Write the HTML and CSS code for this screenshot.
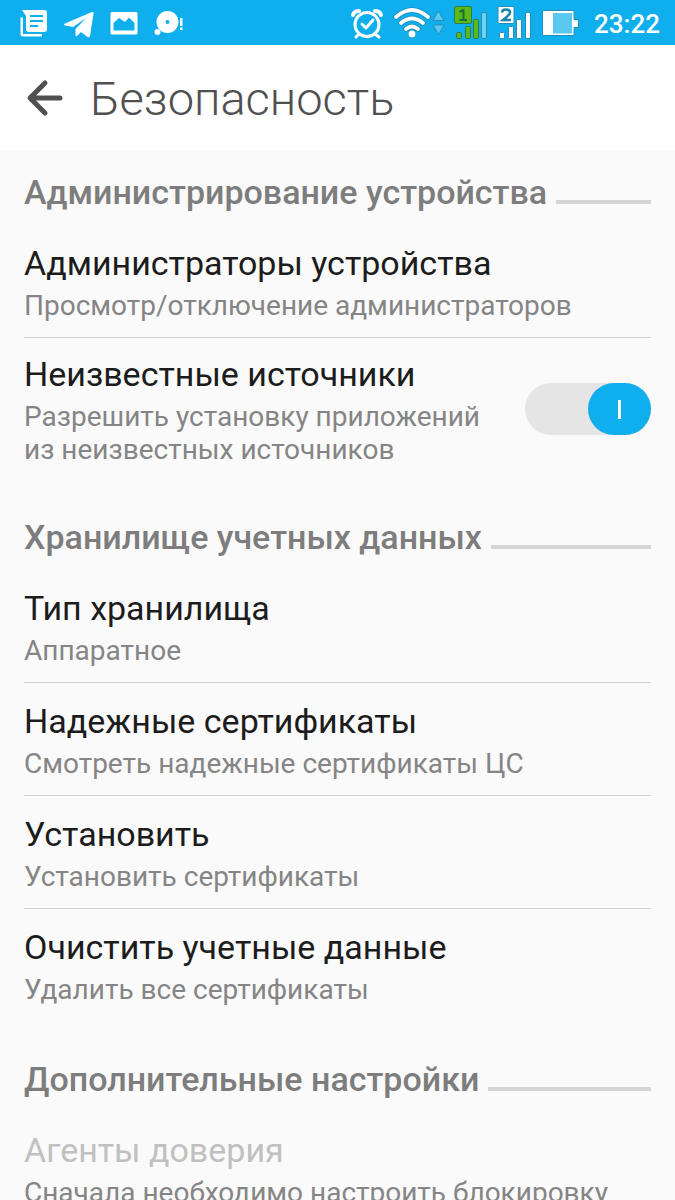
FILE: index.html
```html
<!DOCTYPE html>
<html lang="ru">
<head>
<meta charset="utf-8">
<meta name="viewport" content="width=device-width, initial-scale=1">
<title>Безопасность</title>
<link rel="stylesheet" href="styles.css">
</head>
<body>
<div class="screen">
  <div class="status-bar">
    <svg class="status-icons" width="190" height="45" viewBox="0 0 190 45" fill="#fff" aria-hidden="true">
      <path fill-rule="evenodd" d="M22 10H44Q47 10 47 13V29Q47 32 44 32H29Q26 32 26 29V16ZM30 15V17H43V15ZM30 20V22H43V20ZM30 25V27H38V25Z"/>
      <path d="M20.500 17.500H23V34H42V36.500H23Q20.500 36.500 20.500 34Z"/>
      <path d="M65 23.500L92 12Q94 11.500 93.500 14L90 36Q89.500 38 87.500 37L81 32L77 36Q75.500 37 75.500 35V29L86 18L73 27L65 25.500Q63 24.500 65 23.500Z"/>
      <path fill-rule="evenodd" d="M112 12H136Q137.500 12 137.500 13.500V33Q137.500 34.500 136 34.500H112Q110.500 34.500 110.500 33V13.500Q110.500 12 112 12ZM113.500 30.500H134.500V23L129 17.500L125 22L119 18L113.500 23Z"/>
      <circle cx="167.500" cy="22" r="11"/>
      <circle cx="167.500" cy="22" r="2" fill="#0fafed"/>
      <circle cx="157.500" cy="32" r="3"/>
      <path d="M180 18H182.500V26H180ZM180 27.500H182.500V30H180Z"/>
    </svg>
    <svg class="status-icons status-right" width="229" height="45" viewBox="350 0 229 45" aria-hidden="true">
      <g fill="none" stroke="#fff" stroke-width="3" stroke-linecap="round" stroke-linejoin="round">
        <circle cx="367" cy="24.500" r="12"/><path d="M362 24L366 28L373 20"/><path d="M359 34L356 37M375 34L379 37"/>
        <path stroke-width="4" d="M353 15Q354 11 359 11M375 11Q380 11 381 15"/>
      </g>
      <g fill="none" stroke="#168bb9" stroke-width="5.500" stroke-linecap="round">
        <path d="M396 17Q412 3 428 17M401 23Q412 14 423 23M406 29Q412 24 418 29"/><circle cx="412" cy="34" r="1.500"/>
      </g>
      <g fill="none" stroke="#fff" stroke-width="3.800" stroke-linecap="round">
        <path d="M396 17Q412 3 428 17M401 23Q412 14 423 23M406 29Q412 24 418 29"/>
      </g>
      <circle cx="412" cy="34" r="3.500" fill="#fff"/>
      <path fill="#5bc8f0" stroke="#248eb8" d="M438.500 11L444 20.500H433ZM433 25H444L438.500 34.500Z"/>
      <g fill="#5bb815" stroke="#2b7b50">
        <rect x="454.500" y="6.500" width="17" height="17" rx="1.500"/><rect x="456.500" y="32.500" width="5" height="6" rx="1"/><rect x="465.500" y="26.500" width="5" height="12" rx="1"/><rect x="473.500" y="19.500" width="5" height="19" rx="1"/>
        <rect x="481.500" y="12.500" width="5" height="26" rx="1.500" fill="#70d1f5" stroke="#2489b3"/>
      </g>
      <path fill="none" stroke="#1b6c37" stroke-width="2" d="M459.500 12L463.500 10V20M459.500 20H467"/>
      <g fill="#fff" stroke="#248eb8">
        <rect x="498" y="6.500" width="16" height="17" rx="1"/><rect x="499.500" y="32.500" width="5" height="6" rx="1"/><rect x="508.500" y="26.500" width="5" height="12" rx="1"/><rect x="516.500" y="19.500" width="5" height="19" rx="1"/><rect x="525.500" y="12.500" width="5" height="26" rx="1.500"/>
      </g>
      <path fill="none" stroke="#1684ad" stroke-width="2.500" d="M502 12.500Q502 9.500 506 9.500Q510 9.500 510 12.500Q510 14.500 503 20H511"/>
      <path fill="#fff" stroke="#248eb8" d="M542.500 10.500H574V19.500H578.500V27.500H574V35.500H542.500Z"/>
      <rect x="553" y="13" width="19" height="20.500" fill="#5bc8f0"/>
    </svg>
    <time class="clock">23:22</time>
  </div>
  <header class="app-bar">
    <button class="back" type="button" aria-label="Назад">
      <svg width="40" height="38" viewBox="0 0 40 38" fill="none" stroke="#505050" stroke-width="5" stroke-linecap="round" stroke-linejoin="round"><path d="M21 4L6 19L21 34M7 19H36"/></svg>
    </button>
    <h1 class="title">Безопасность</h1>
  </header>
  <main class="settings">
    <section class="group">
      <h2 class="group-title">Администрирование устройства</h2>
      <ul class="list">
        <li class="item"><h3 class="name">Администраторы устройства</h3><p class="note">Просмотр/отключение администраторов</p></li>
        <li class="item item-switch">
          <label class="item-text" for="unknown"><span class="name">Неизвестные источники</span><span class="note">Разрешить установку приложений из неизвестных источников</span></label>
          <input class="switch" id="unknown" type="checkbox" role="switch" checked>
        </li>
      </ul>
    </section>
    <section class="group">
      <h2 class="group-title">Хранилище учетных данных</h2>
      <ul class="list">
        <li class="item"><h3 class="name">Тип хранилища</h3><p class="note">Аппаратное</p></li>
        <li class="item"><h3 class="name">Надежные сертификаты</h3><p class="note">Смотреть надежные сертификаты ЦС</p></li>
        <li class="item"><h3 class="name">Установить</h3><p class="note">Установить сертификаты</p></li>
        <li class="item"><h3 class="name">Очистить учетные данные</h3><p class="note">Удалить все сертификаты</p></li>
      </ul>
    </section>
    <section class="group">
      <h2 class="group-title">Дополнительные настройки</h2>
      <ul class="list">
        <li class="item"><h3 class="name name-disabled">Агенты доверия</h3><p class="note">Сначала необходимо настроить блокировку</p></li>
      </ul>
    </section>
  </main>
</div>
</body>
</html>
```
FILE: styles.css
```css
* { box-sizing: border-box; margin: 0; padding: 0; }
body { background: #fafafa; font-family: Roboto, "Noto Sans", sans-serif; }
.screen { height: 100vh; overflow: hidden; }
.status-bar { display: flex; align-items: center; height: 45px; padding-right: 15px; background: #0fafed; }
.status-icons { display: block; flex: none; }
.status-right { margin-left: auto; }
.clock { margin-left: 15px; padding-top: 3px; color: #fff; font-size: 26px; font-weight: 500; line-height: 32px; }
.app-bar { display: flex; align-items: center; gap: 26px; padding: 20px 24px; background: #fff; }
.back { display: flex; border: 0; background: none; }
.title { padding-top: 3px; color: #505050; font-size: 47px; font-weight: 300; line-height: 62px; }
.settings { padding: 20px 24px 0; }
.group { margin-bottom: 36px; }
.group-title { display: flex; align-items: flex-end; gap: 9px; margin-bottom: 11px; color: #7d7d7d; font-size: 34px; font-weight: 500; line-height: 44px; }
.group-title::after { content: ""; flex: 1; height: 4px; margin-bottom: 10px; background: #d3d5d5; }
.list { list-style: none; }
.item { padding: 16px 0 15px; border-bottom: 1px solid #d3d3d3; }
.item:last-child { border-bottom: 0; }
.item-switch { display: flex; align-items: center; justify-content: space-between; gap: 24px; padding: 14px 0 13px; }
.name { display: block; color: #1c1c1c; font-size: 34px; font-weight: 400; line-height: 44px; }
.name-disabled { color: #c0c0c0; }
.note { display: block; margin-top: 4px; color: #858585; font-size: 28px; line-height: 33px; }
.switch { position: relative; flex: none; width: 126px; height: 52px; appearance: none; border-radius: 26px; background: #e5e5e5; }
.switch::before { content: ""; position: absolute; top: 0; left: 0; width: 63px; height: 52px; border-radius: 26px; background: linear-gradient(#fff, #fff) center / 3px 19px no-repeat #0fafed; }
.switch:checked::before { left: auto; right: 0; }
```
